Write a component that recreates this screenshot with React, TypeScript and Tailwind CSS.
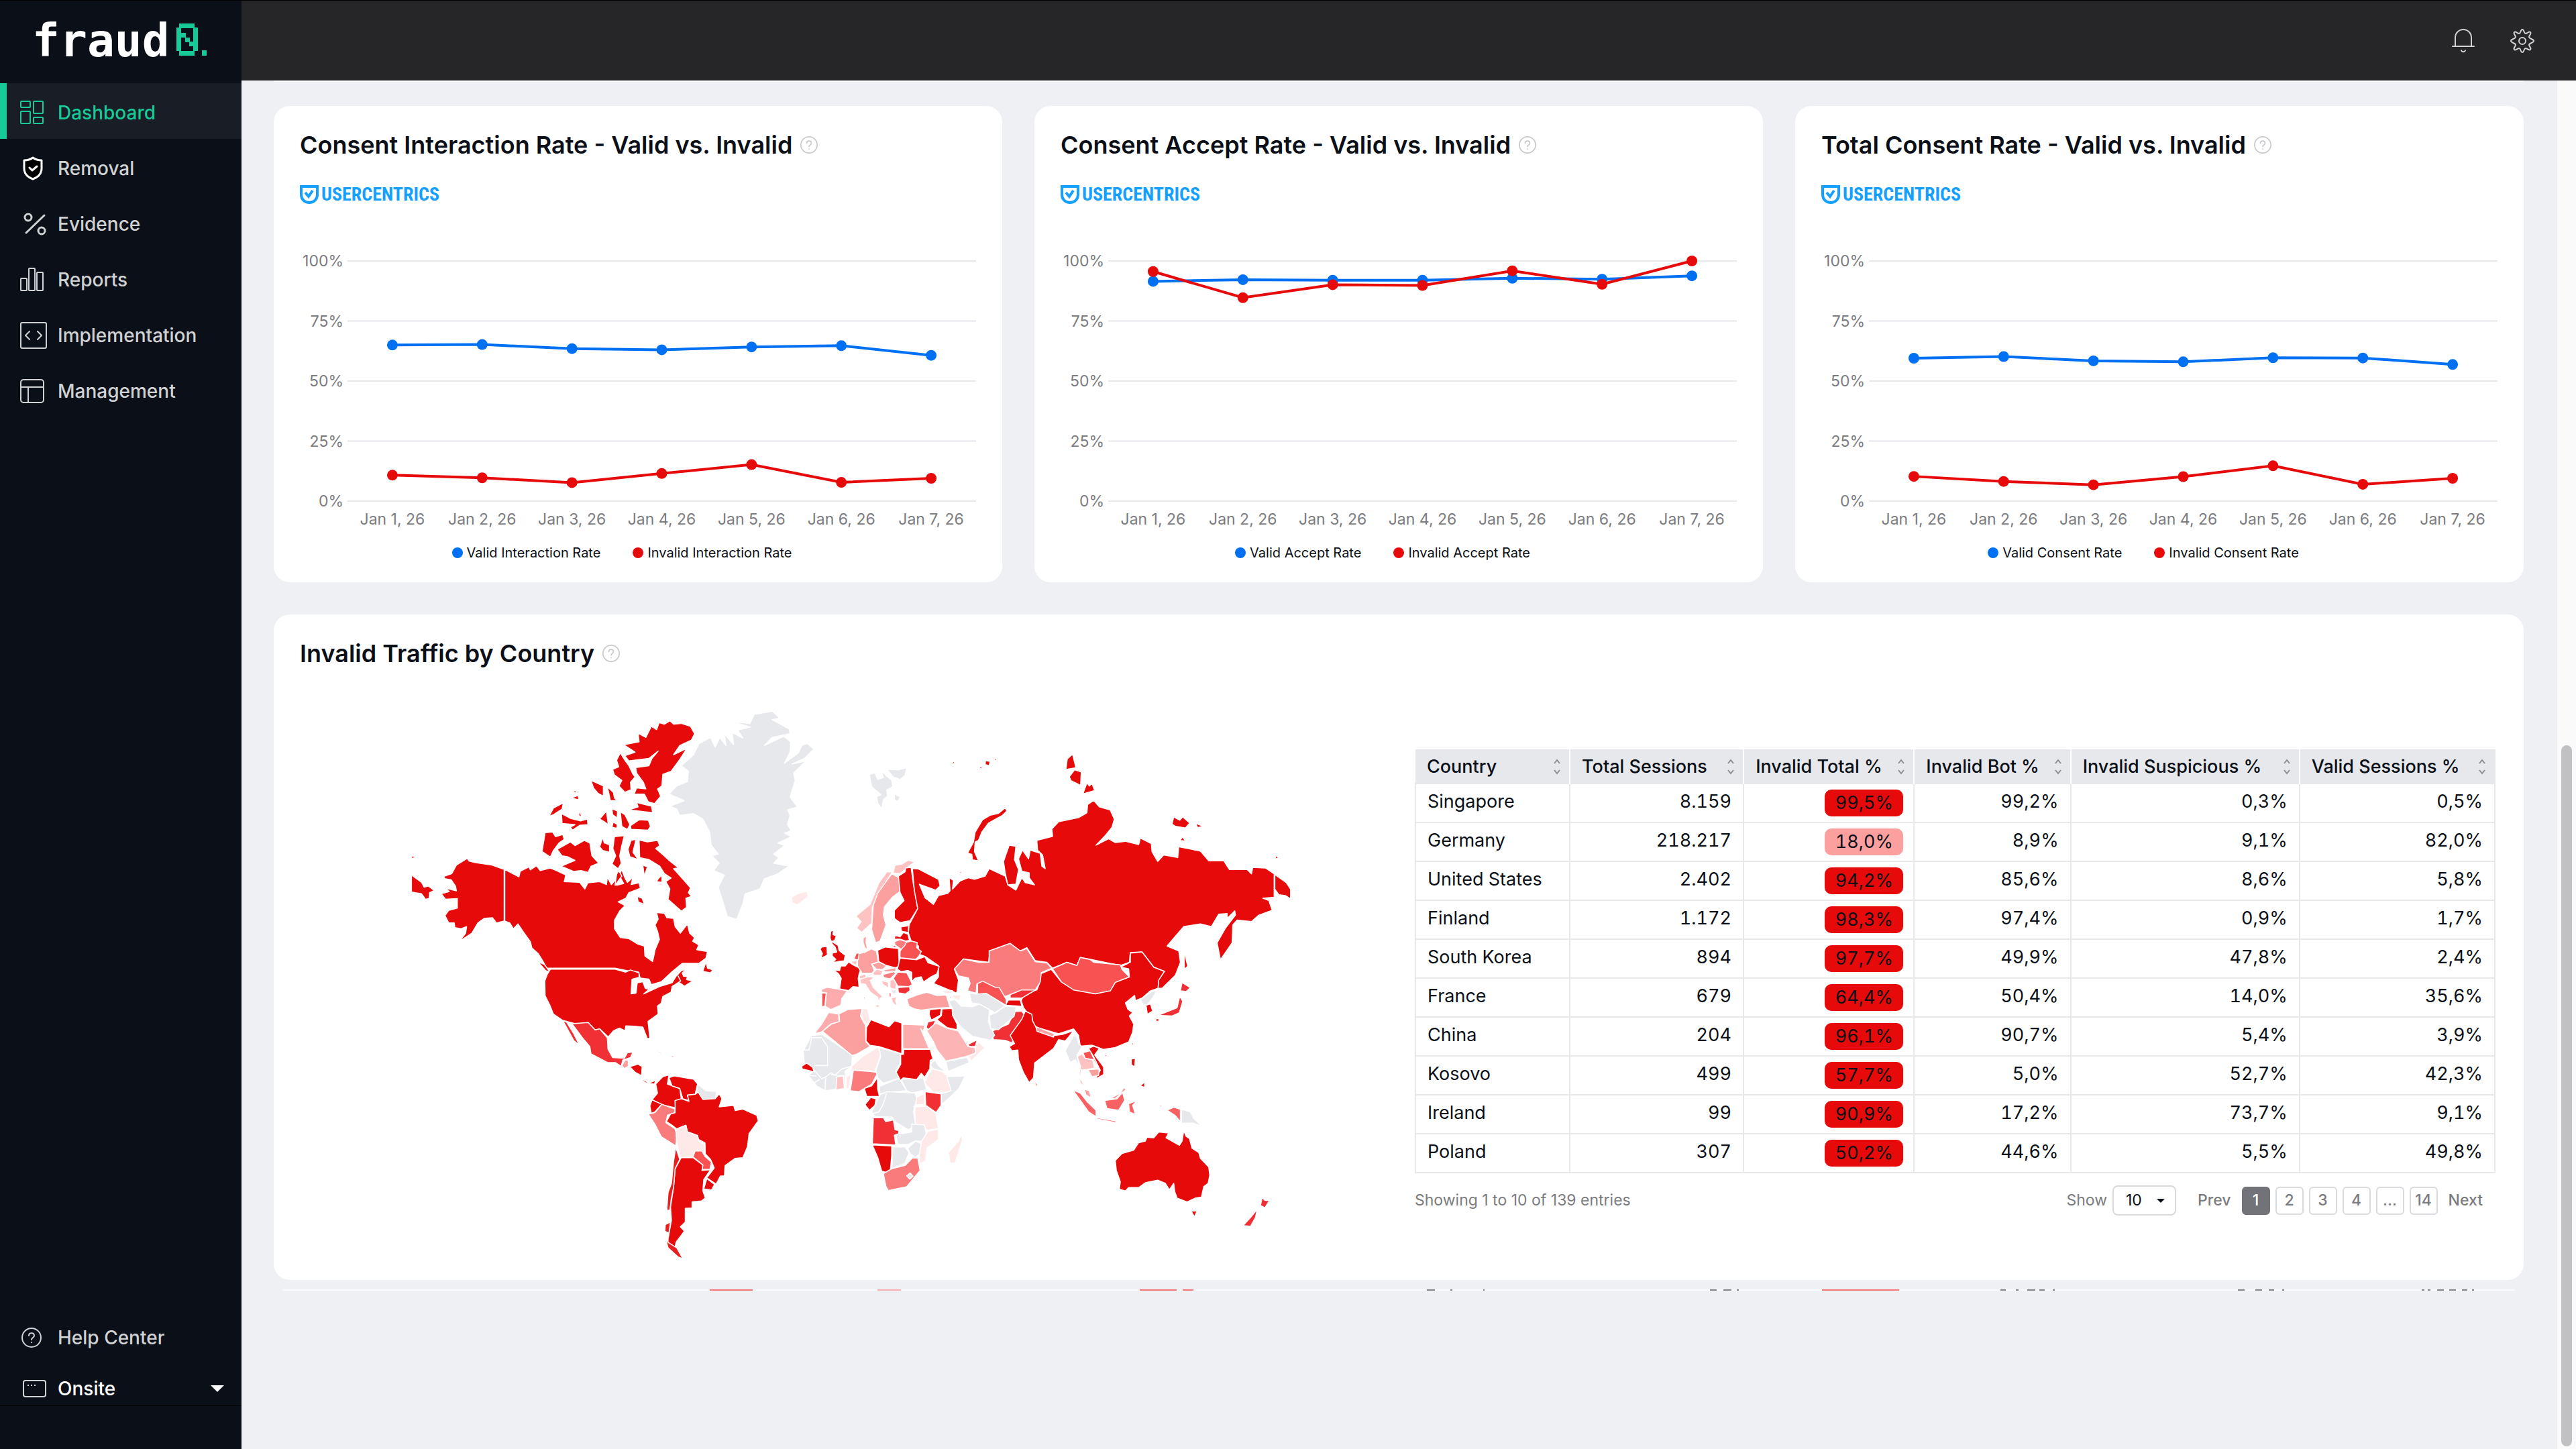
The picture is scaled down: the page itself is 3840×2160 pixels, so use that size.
import React, { useState } from 'react';

const RED = '#e60a0b';
const BLUE = '#0070f3';

interface ChartSeries {
  label: string;
  color: string;
  values: number[];
}

interface RateCardProps {
  title: string;
  series: ChartSeries[];
}

interface CountryRow {
  country: string;
  sessions: string;
  total: string;
  bot: string;
  suspicious: string;
  valid: string;
}

interface Land {
  fill: string;
  d: string;
}

const days = ['Jan 1, 26', 'Jan 2, 26', 'Jan 3, 26', 'Jan 4, 26', 'Jan 5, 26', 'Jan 6, 26', 'Jan 7, 26'];

const charts: RateCardProps[] = [
  {
    title: 'Consent Interaction Rate - Valid vs. Invalid',
    series: [
      { label: 'Valid Interaction Rate', color: BLUE, values: [65, 65.2, 63.5, 63, 64.2, 64.7, 60.7] },
      { label: 'Invalid Interaction Rate', color: RED, values: [10.8, 9.7, 7.7, 11.5, 15.2, 7.8, 9.5] },
    ],
  },
  {
    title: 'Consent Accept Rate - Valid vs. Invalid',
    series: [
      { label: 'Valid Accept Rate', color: BLUE, values: [91.5, 92.2, 92, 92, 92.8, 92.4, 93.8] },
      { label: 'Invalid Accept Rate', color: RED, values: [95.6, 84.7, 90.1, 89.8, 95.9, 90.3, 100] },
    ],
  },
  {
    title: 'Total Consent Rate - Valid vs. Invalid',
    series: [
      { label: 'Valid Consent Rate', color: BLUE, values: [59.5, 60.2, 58.4, 58, 59.7, 59.6, 56.9] },
      { label: 'Invalid Consent Rate', color: RED, values: [10.3, 8.2, 6.8, 10.2, 14.7, 7, 9.5] },
    ],
  },
];

const rows: CountryRow[] = [
  { country: 'Singapore', sessions: '8.159', total: '99,5%', bot: '99,2%', suspicious: '0,3%', valid: '0,5%' },
  { country: 'Germany', sessions: '218.217', total: '18,0%', bot: '8,9%', suspicious: '9,1%', valid: '82,0%' },
  { country: 'United States', sessions: '2.402', total: '94,2%', bot: '85,6%', suspicious: '8,6%', valid: '5,8%' },
  { country: 'Finland', sessions: '1.172', total: '98,3%', bot: '97,4%', suspicious: '0,9%', valid: '1,7%' },
  { country: 'South Korea', sessions: '894', total: '97,7%', bot: '49,9%', suspicious: '47,8%', valid: '2,4%' },
  { country: 'France', sessions: '679', total: '64,4%', bot: '50,4%', suspicious: '14,0%', valid: '35,6%' },
  { country: 'China', sessions: '204', total: '96,1%', bot: '90,7%', suspicious: '5,4%', valid: '3,9%' },
  { country: 'Kosovo', sessions: '499', total: '57,7%', bot: '5,0%', suspicious: '52,7%', valid: '42,3%' },
  { country: 'Ireland', sessions: '99', total: '90,9%', bot: '17,2%', suspicious: '73,7%', valid: '9,1%' },
  { country: 'Poland', sessions: '307', total: '50,2%', bot: '44,6%', suspicious: '5,5%', valid: '49,8%' },
];

const columns = [
  { label: 'Country', width: 'w-[14.3%]' },
  { label: 'Total Sessions', width: 'w-[16.1%]' },
  { label: 'Invalid Total %', width: 'w-[15.8%]' },
  { label: 'Invalid Bot %', width: 'w-[14.5%]' },
  { label: 'Invalid Suspicious %', width: 'w-[21.2%]' },
  { label: 'Valid Sessions %', width: 'w-[18.1%]' },
];

// Map shades, from no data to fully invalid
const NONE = '#e6e8eb';
const S1 = '#fee8e8';
const S2 = '#fec2c2';
const S3 = '#fc9f9f';
const S4 = '#f97b7c';
const S5 = '#f85253';
const S6 = '#f03034';

const americas: Land[] = [
  // Alaska and the far east tip
  { fill: RED, d: 'M134,486 160,478 175,455 210,437 216,444 235,448 290,455 330,467 330,607 305,612 292,598 265,600 245,612 225,640 185,662 205,640 208,622 190,628 170,625 168,612 150,612 138,592 150,578 178,572 178,546 140,548 126,533 152,527 140,518 175,525 172,512 158,495 137,492z' },
  { fill: RED, d: 'M29,482 62,502 70,515 84,512 103,524 88,530 86,546 75,548 62,533 41,530 29,528zM30,429 42,434 30,438z' },
  // Canada
  { fill: RED, d: 'M332,467 378,487 382,472 410,460 415,468 435,457 447,470 480,463 500,470 530,482 525,500 575,502 592,520 602,503 640,500 662,508 665,488 678,508 692,495 695,510 718,505 703,482 712,468 722,490 730,502 748,488 742,508 768,503 772,518 735,530 725,545 700,555 722,565 705,580 688,605 688,628 707,652 735,655 765,670 785,675 787,702 812,717 820,685 834,657 828,635 820,618 830,602 825,584 850,586 858,598 880,600 885,622 902,640 925,615 932,640 948,652 942,662 962,672 955,685 990,690 985,708 962,722 908,722 875,745 840,772 808,780 800,765 772,762 765,745 735,743 690,735 480,735 468,735 455,715 440,695 420,680 415,663 395,640 375,615 360,628 348,612 332,607z' },
  { fill: RED, d: 'M440,718 460,725 478,745 465,742zM880,765 905,742 922,738 908,748 912,757 925,758 922,766 942,770 915,784 905,778zM975,744 985,718 990,735 1007,740 1000,748z' },
  // Ellesmere and Axel Heiberg
  { fill: RED, d: 'M833,68 850,72 868,63 880,72 905,70 935,78 948,98 938,115 900,130 880,155 923,138 900,168 872,200 845,208 842,240 828,248 838,268 818,288 798,283 785,262 752,262 760,245 790,248 782,230 760,205 757,190 800,185 810,165 830,145 800,165 735,172 722,158 755,148 718,128 768,120 765,97 790,108 808,78 825,87z' },
  { fill: RED, d: 'M707,150 722,170 735,185 748,208 755,215 740,230 742,250 722,257 703,240 712,225 688,210 682,195 702,188 695,170z' },
  // Arctic islands
  { fill: RED, d: 'M735,305 765,297 760,285 808,295 812,312 785,310zM740,348 768,332 798,333 805,350 797,360 742,358zM707,310 722,318 738,345 730,358 712,350zM680,302 698,308 697,327 682,318zM684,338 698,345 695,355 680,352zM612,225 652,240 652,268 635,260 620,245zM665,242 685,258 688,273 698,280 675,280zM548,272 570,266 572,278zM552,256 572,247 560,258zM476,322 490,300 522,286 518,303 490,318zM516,315 545,328 578,335 600,330 602,345 575,347 552,360 545,352 560,345 518,342zM575,307 582,325 572,320zM640,330 662,308 668,345 655,337z' },
  { fill: RED, d: 'M463,367 487,365 497,378 520,372 525,385 508,395 490,415 480,433 453,418zM502,412 545,392 560,402 590,388 608,395 615,430 637,450 612,458 602,475 580,470 555,472 515,458 560,442 535,432 518,430zM640,405 650,380 655,395 672,400 672,420 650,415zM688,378 720,375 712,402 705,430 710,450 700,465 680,452 692,430 683,410zM702,470 712,485 690,510 695,480z' },
  { fill: RED, d: 'M732,412 742,388 758,385 748,420 765,440 738,432zM768,387 795,392 828,388 835,402 822,410 850,430 865,442 895,462 880,465 905,488 935,517 928,530 938,540 920,545 922,570 905,580 862,548 868,520 855,500 872,490 850,478 835,458 800,440 770,435zM762,540 778,545 785,562 765,555zM830,492 842,482 842,502 825,500zM780,455 795,460 785,485z' },
  { fill: NONE, d: 'M1142,45 1200,37 1225,55 1200,60 1255,85 1258,98 1200,108 1175,130 1238,105 1260,120 1258,148 1240,178 1285,150 1298,128 1315,125 1335,140 1305,165 1265,180 1310,172 1270,205 1275,225 1258,270 1282,297 1250,305 1258,320 1250,345 1262,362 1240,368 1262,378 1218,395 1240,402 1205,425 1222,435 1205,450 1255,458 1215,480 1175,492 1160,520 1112,533 1105,560 1085,602 1055,595 1040,555 1025,515 1045,482 1010,470 1028,450 1005,430 1025,425 1002,400 997,365 975,330 945,315 900,320 890,302 868,295 915,280 865,262 890,240 925,228 928,200 905,185 945,155 962,125 1000,108 1015,135 1030,108 1050,130 1045,98 1075,128 1070,95 1105,110 1088,88 1130,80 1070,65 1128,70z' },
  // United States
  { fill: RED, d: 'M480,738 690,738 725,746 740,740 768,748 768,760 745,765 742,805 758,803 762,775 780,772 788,790 800,793 783,805 835,785 875,775 892,752 903,770 875,785 872,800 845,812 840,830 828,838 830,860 797,880 803,925 795,927 780,895 752,893 725,892 722,905 705,898 685,905 668,922 640,900 625,903 603,883 565,887 520,877 490,860 478,835 463,810 462,770 470,752z' },
  { fill: S6, d: 'M550,886 603,883 625,903 640,900 665,925 667,955 682,978 720,980 730,965 748,963 740,978 715,985 710,1002 692,992 667,992 612,968 608,948 585,925zM520,877 533,882 555,912 575,945 556,932z' },
  { fill: S3, d: 'M712,1000 722,985 733,985 733,1002 720,1008z' },
  { fill: RED, d: 'M738,1003 765,996 778,1003 776,1027 755,1018zM760,1029 785,1040 800,1047 822,1040 818,1050 790,1047z' },
  { fill: NONE, d: 'M795,947 845,966 838,968z' },
  { fill: S3, d: 'M872,972 887,976 874,979z' },
  // South America
  { fill: RED, d: 'M822,1050 845,1030 865,1025 860,1050 900,1062 905,1090 885,1095 887,1115 845,1107 810,1093 828,1075z' },
  { fill: RED, d: 'M865,1033 882,1028 945,1037 958,1050 950,1078 925,1080 930,1095 910,1090 900,1062 875,1055z' },
  { fill: NONE, d: 'M958,1050 985,1068 1020,1070 1015,1090 975,1092 955,1070z' },
  { fill: RED, d: 'M810,1093 842,1105 820,1125 808,1130 803,1110z' },
  { fill: S4, d: 'M842,1105 885,1118 883,1128 860,1135 855,1155 885,1172 890,1190 887,1218 840,1193 820,1160 798,1132 820,1127z' },
  { fill: RED, d: 'M885,1095 905,1090 930,1097 925,1080 950,1078 960,1072 975,1092 1015,1090 1028,1077 1037,1090 1028,1112 1075,1108 1080,1122 1105,1118 1150,1135 1155,1150 1125,1185 1120,1220 1105,1250 1080,1252 1047,1272 1045,1300 1032,1300 1018,1322 988,1305 1012,1278 1000,1255 983,1240 982,1210 960,1200 958,1190 925,1180 920,1162 890,1172 875,1162 857,1152 870,1132 885,1128z' },
  { fill: S1, d: 'M890,1172 920,1162 925,1180 958,1190 962,1205 980,1215 982,1235 950,1232 943,1248 902,1250 893,1222 888,1190z' },
  { fill: S5, d: 'M950,1232 972,1232 983,1248 1003,1262 998,1282 973,1282 975,1270 943,1248z' },
  { fill: RED, d: 'M988,1307 1013,1323 1003,1338 978,1335z' },
  { fill: RED, d: 'M905,1250 943,1250 975,1270 972,1285 1000,1283 978,1310 975,1340 983,1360 970,1368 940,1370 940,1387 918,1388 918,1425 902,1438 915,1450 888,1480 885,1493 862,1490 862,1472 873,1420 870,1385 880,1330 885,1280z' },
  { fill: '#e81f20', d: 'M887,1222 900,1255 885,1280 880,1330 872,1365 868,1393 858,1393 862,1345 873,1320 880,1260zM853,1432 870,1425 865,1455 852,1450zM854,1470 862,1480 890,1495 910,1525 895,1520 862,1495z' },
];

const world: Land[] = [
  { fill: S1, d: 'M0,490 20,478 45,472 50,488 18,513 2,508z' },
  { fill: NONE, d: 'M233,112 250,108 258,128 275,122 270,100 285,118 300,130 303,150 285,160 288,178 275,190 270,218 258,200 255,180 268,175 240,150zM286,97 320,98 345,92 340,115 325,128 305,120zM308,172 326,182 318,195 308,190z' },
  // Scandinavia
  { fill: S2, d: 'M193,548 235,512 248,480 262,445 285,412 305,412 310,392 330,388 350,376 370,382 350,395 325,418 300,415 262,478 242,520 240,570 210,598 195,585 208,565z' },
  { fill: S3, d: 'M242,555 245,515 258,478 300,418 322,430 325,472 302,490 278,520 275,545 283,575 265,625 252,630 240,590z' },
  { fill: RED, d: 'M320,425 340,412 342,400 358,398 365,450 378,525 355,562 325,568 308,555 308,530 337,500 325,475z' },
  // Russia
  { fill: RED, d: 'M362,402 380,403 440,435 445,455 432,468 383,450 400,492 425,512 440,485 468,478 475,470 472,430 485,438 482,465 505,440 530,430 548,435 580,425 592,402 640,425 648,452 672,468 690,430 700,445 728,452 712,430 712,415 690,410 680,372 692,345 710,372 715,345 745,355 750,395 760,402 752,360 737,345 735,315 782,303 780,280 800,258 860,245 885,230 887,205 905,192 922,212 955,222 967,250 960,275 940,300 912,330 950,310 970,322 1000,318 1040,328 1045,308 1078,325 1080,350 1097,380 1115,360 1157,368 1160,335 1225,348 1250,378 1295,378 1312,405 1365,405 1378,418 1382,398 1420,400 1446,418 1446,490 1412,493 1430,500 1440,530 1400,545 1378,565 1335,560 1322,575 1320,630 1285,682 1275,630 1300,585 1330,545 1328,532 1305,555 1305,540 1280,542 1258,580 1225,572 1175,580 1125,640 1160,655 1165,690 1150,730 1110,770 1097,770 1098,745 1117,718 1085,705 1050,658 1015,660 1012,690 985,700 890,680 865,675 855,700 825,690 782,708 765,690 730,685 705,645 685,655 655,632 595,655 590,690 515,680 488,712 500,745 495,785 425,755 440,735 440,700 400,672 380,665 380,640 360,630 350,600 352,575 378,525 368,470z' },
  { fill: RED, d: 'M648,452 640,415 635,380 652,330 672,333 668,375 680,405 672,450zM1448,420 1482,445 1495,465 1495,495 1480,485 1460,482 1448,465z' },
  { fill: RED, d: 'M527,355 545,320 550,290 572,252 595,238 620,232 640,215 645,225 632,238 590,262 570,290 560,315 550,320 548,350 560,378 542,375 540,358zM822,97 826,65 842,50 852,92zM832,120 848,98 868,105 866,146 838,132zM873,172 885,138 892,148 900,140 908,162zM1140,265 1145,243 1163,253 1172,243 1193,262 1180,277 1150,272zM1210,262 1233,272 1217,276zM1163,315 1172,305 1180,317zM478,78 490,70 486,80zM545,58 562,70 555,68zM581,70 595,72 592,85 580,82zM603,70 617,58 613,68zM562,90 572,88 568,97zM1450,362 1460,368 1450,373zM1176,655 1187,702 1177,712zM503,410 512,412 505,417z' },
  { fill: S4, d: 'M488,710 515,680 560,690 592,690 592,655 655,632 685,655 705,648 730,688 765,692 780,708 748,722 748,748 730,775 690,775 640,795 580,752 555,757 553,785 527,778 535,755 530,738 500,732z' },
  // East Asia
  { fill: RED, d: 'M688,808 698,785 735,775 745,750 748,725 778,712 808,750 845,772 910,787 955,775 970,750 1012,735 1010,710 985,705 1015,690 1015,662 1050,658 1085,705 1117,718 1100,745 1098,770 1075,778 1050,800 1030,808 1028,792 1000,815 1008,835 1022,845 1012,855 1025,880 1022,905 1010,935 970,952 935,958 900,945 865,948 860,915 845,895 800,910 750,895 730,890 718,860 695,830z' },
  { fill: S5, d: 'M782,710 825,690 855,700 865,675 895,682 905,690 985,698 990,712 1012,735 970,752 955,778 910,787 845,775 808,750z' },
  { fill: NONE, d: 'M1045,805 1075,782 1095,775 1085,795 1065,822 1052,818z' },
  { fill: RED, d: 'M1062,822 1075,818 1082,840 1066,850z' },
  { fill: S6, d: 'M1170,752 1195,768 1182,780 1165,778zM1163,795 1172,810 1162,845 1140,855 1098,853 1155,830zM1092,860 1105,868 1092,874zM655,790 690,775 732,775 715,785 690,800 655,800z' },
  { fill: RED, d: 'M640,822 650,806 685,806 690,825zM1018,988 1030,985 1028,1012 1018,1005zM1045,1070 1058,1058 1058,1075zM1019,940 1025,935 1022,950zM938,974 946,976 940,982z' },
  // South Asia
  { fill: S6, d: 'M600,902 650,880 668,842 690,840 705,865 680,890 660,938 640,930 605,928z' },
  { fill: RED, d: 'M655,915 690,865 700,840 720,850 722,870 735,895 788,915 812,912 845,900 830,920 820,932 800,928 785,955 728,1000 725,1045 712,1060 695,1030 680,990 678,960 660,962 652,950 668,940z' },
  { fill: S3, d: 'M732,888 787,910 785,920 735,902zM728,1055 738,1066 732,1075z' },
  { fill: NONE, d: 'M820,962 845,915 855,918 860,940 870,950 855,975 862,1012 850,990 835,998z' },
  { fill: S2, d: 'M856,980 870,972 880,985 902,990 908,1015 885,1020 868,1020 865,1045 878,1072 865,1062 862,1030 866,1010z' },
  { fill: S5, d: 'M873,968 895,962 905,985 925,1005 922,1018 905,990 880,985z' },
  { fill: RED, d: 'M890,955 905,948 922,955 908,975 935,1012 935,1035 910,1050 925,1022 905,980z' },
  { fill: S3, d: 'M888,1020 922,1018 920,1038 900,1042zM955,1108 985,1092 995,1075 1003,1082 985,1095 970,1110zM877,1080 892,1085 898,1107 882,1098z' },
  { fill: '#f86263', d: 'M843,1083 865,1092 885,1118 912,1145 912,1165 890,1150zM912,1167 972,1178 972,1183 915,1172zM938,1115 975,1110 992,1090 998,1115 980,1145 945,1140zM1010,1125 1035,1115 1022,1130 1030,1158 1012,1150zM1125,1145 1145,1136 1165,1142 1165,1180 1150,1162zM1100,1128 1113,1132 1105,1135z' },
  { fill: NONE, d: 'M1168,1142 1195,1150 1205,1170 1230,1195 1205,1185 1168,1185zM1230,1165 1243,1158 1235,1165z' },
  // Oceania
  { fill: RED, d: 'M970,1300 990,1278 1025,1268 1040,1245 1060,1240 1065,1228 1085,1230 1100,1212 1130,1215 1122,1230 1162,1253 1170,1240 1175,1208 1182,1225 1192,1232 1200,1262 1220,1275 1225,1293 1250,1320 1253,1345 1248,1370 1235,1380 1228,1412 1210,1415 1185,1427 1155,1415 1148,1395 1145,1370 1132,1390 1120,1370 1097,1360 1060,1368 1040,1383 1010,1383 1000,1393 982,1388 985,1365 973,1330zM1197,1455 1215,1455 1207,1473z' },
  { fill: S6, d: 'M1410,1413 1418,1422 1432,1423 1418,1445 1405,1438zM1353,1500 1375,1475 1395,1450 1390,1475 1375,1502z' },
  // Africa
  { fill: NONE, d: 'M35,962 60,915 92,912 182,975 180,1010 160,1025 160,1075 135,1080 100,1085 75,1070 50,1038 68,1022 38,1000z' },
  { fill: 'none', d: 'M36,960 52,960 58,935 60,922 92,922M92,925 108,950 108,1008 68,1008M180,1010 150,1018 130,1038 118,1030 100,1045M68,1022 90,1048 102,1043 100,1085M118,1035 160,1040M65,1062 85,1050M50,1038 75,1040' },
  { fill: RED, d: 'M30,1010 45,1000 62,1012 68,1027 32,1018z' },
  { fill: S2, d: 'M135,1043 155,1040 158,1078 133,1083z' },
  { fill: S1, d: 'M180,1018 180,1010 215,978 260,950 267,975 250,1025 190,1022 165,1028zM163,1045 178,1032 172,1078 163,1080z' },
  { fill: S4, d: 'M176,1085 185,1022 245,1027 258,1030 240,1065 202,1088z' },
  { fill: NONE, d: 'M253,1022 267,980 262,952 328,972 325,1000 312,1025 325,1045 275,1062 258,1045z' },
  { fill: RED, d: 'M218,1078 240,1070 257,1045 258,1080 263,1103 225,1102zM220,1128 237,1106 253,1110 250,1130 233,1145z' },
  { fill: NONE, d: 'M263,1072 322,1047 345,1085 285,1090 265,1095z' },
  { fill: NONE, d: 'M328,1050 395,1045 405,1082 360,1092 345,1085z' },
  { fill: S1, d: 'M398,1060 420,1018 450,1025 497,1065 470,1090 425,1090z' },
  { fill: NONE, d: 'M415,1005 430,990 440,1008 465,1028 425,1018zM465,1042 520,1040 500,1080 450,1128 448,1095 478,1085z' },
  { fill: S6, d: 'M400,1088 448,1095 448,1130 433,1152 402,1130z' },
  { fill: S1, d: 'M375,1105 398,1093 398,1128 370,1128zM370,1135 405,1132 432,1155 440,1200 408,1207 370,1185z' },
  { fill: NONE, d: 'M240,1150 265,1098 285,1088 370,1092 375,1110 365,1150 372,1190 350,1205 312,1182 300,1165 250,1165z' },
  { fill: 'none', d: 'M285,1092 275,1125 262,1150 245,1155' },
  { fill: S6, d: 'M245,1168 275,1168 282,1180 305,1175 310,1205 322,1208 320,1218 308,1222 312,1252 242,1248z' },
  { fill: NONE, d: 'M313,1220 360,1212 360,1188 398,1190 408,1240 370,1240 350,1250 318,1250z' },
  { fill: RED, d: 'M242,1252 300,1255 300,1285 295,1340 270,1332 258,1290zM366,1133 371,1133 369,1140z' },
  { fill: NONE, d: 'M303,1258 340,1258 352,1275 340,1308 300,1325z' },
  { fill: NONE, d: 'M348,1262 372,1240 388,1248 388,1278 370,1290 355,1278z' },
  { fill: S1, d: 'M408,1210 440,1203 440,1235 405,1262 402,1300 385,1310 382,1285 390,1240zM470,1275 500,1240 508,1218 512,1235 490,1308 475,1308z' },
  { fill: S4, d: 'M275,1340 300,1325 340,1315 362,1292 378,1292 385,1330 345,1380 290,1392 283,1380z' },
  { fill: NONE, d: 'M345,1347 355,1338 364,1348 354,1357z' },
];

const europe: Land[] = [
  { fill: RED, d: 'M85,25 97,20 95,40 110,45 103,65 90,70 118,88 122,110 140,125 150,132 145,157 120,160 93,165 108,150 92,135 92,122 112,118 105,95 92,82 82,55zM45,95 68,92 70,132 40,145 48,125 38,105z' },
  { fill: RED, d: 'M97,197 125,200 130,180 150,180 165,162 185,175 220,192 212,215 208,235 212,275 185,272 165,290 125,282 132,235 120,215z' },
  { fill: '#fcacac', d: 'M43,285 70,275 160,290 135,325 130,355 85,375 60,360 66,300 45,298z' },
  { fill: S5, d: 'M45,300 65,302 58,360 45,362z' },
  { fill: S3, d: 'M205,125 235,120 268,103 290,115 298,162 268,172 280,200 270,212 225,212 205,180zM230,55 245,45 243,75 250,105 238,100 230,75z' },
  { fill: S5, d: 'M188,148 200,122 212,122 208,152z' },
  { fill: S2, d: 'M172,160 203,155 200,178zM212,225 240,215 245,235 215,238zM272,212 290,195 320,200 310,222 278,222z' },
  { fill: S3, d: 'M268,172 300,162 335,178 318,195 290,195zM322,197 378,187 375,203 330,207z' },
  { fill: S4, d: 'M318,218 370,205 375,215 350,238 322,232z' },
  { fill: S2, d: 'M215,240 250,228 282,230 262,245 275,275 318,318 305,325 300,345 295,320 262,297 240,262 218,258zM278,357 302,352 300,368zM230,316 240,320 236,338zM310,245 342,252 345,280 318,262zM350,245 365,238 380,262 375,285 350,278zM356,322 382,318 375,335 383,358 370,352 360,340zM418,303 435,305 430,312z' },
  { fill: NONE, d: 'M355,288 378,285 378,302 362,305z' },
  { fill: S3, d: 'M345,295 357,302 355,322 345,315z' },
  { fill: RED, d: 'M295,110 330,95 388,102 390,150 392,180 375,188 335,178 300,160zM358,95 372,86 380,95z' },
  { fill: S5, d: 'M365,235 385,207 425,210 440,240 450,262 435,272 385,270z' },
  { fill: S6, d: 'M385,277 438,272 440,290 420,305 388,300z' },
  { fill: S1, d: 'M430,205 448,205 462,235 448,240zM585,288 630,290 628,305 590,300zM630,310 668,308 660,335 632,322z' },
  { fill: RED, d: 'M383,195 395,145 470,152 505,138 520,165 570,182 560,215 535,228 500,252 490,228 462,235 448,250 447,208 430,200 400,205zM607,315 622,318 625,328z' },
  { fill: S5, d: 'M395,115 420,75 445,68 472,75 470,98 490,115 480,135 465,150 395,143z' },
  { fill: S4, d: 'M370,72 395,62 425,72 415,90 400,105 372,85z' },
  { fill: RED, d: 'M370,60 372,42 395,50 410,30 430,38 437,65 420,68 395,60zM398,5 433,0 432,30 402,25z' },
  { fill: S3, d: 'M425,328 470,310 515,298 560,312 602,310 618,365 560,368 490,377 460,372 435,360z' },
  // Middle East
  { fill: RED, d: 'M528,375 580,370 575,400 535,422 525,395zM583,372 628,370 630,400 650,440 650,465 605,455 560,420 580,402z' },
  { fill: S6, d: 'M512,455 520,430 555,422 545,445 522,465zM700,530 740,510 732,540 705,540z' },
  { fill: '#fdb4b4', d: 'M515,470 555,435 610,460 655,470 700,540 730,545 732,570 690,585 600,605 560,555 545,520z' },
  { fill: S1, d: 'M732,545 745,518 775,545 715,605 700,585 732,570z' },
  { fill: NONE, d: 'M600,608 695,588 705,612 610,652z' },
  { fill: NONE, d: 'M612,337 640,330 670,360 720,362 750,350 795,375 790,430 818,490 800,512 745,500 720,495 665,450 630,400 632,375z' },
  { fill: NONE, d: 'M705,300 740,305 768,287 865,358 820,388 750,350 715,345z' },
  { fill: NONE, d: 'M795,400 825,388 865,360 915,362 905,405 835,465 800,460z' },
  { fill: S5, d: 'M742,258 765,248 820,275 838,275 870,330 870,357 780,302 742,305z' },
  // North Africa
  { fill: '#fcacac', d: 'M12,482 45,440 75,388 120,395 122,430 85,440 45,475z' },
  { fill: S3, d: 'M48,472 88,440 125,428 122,395 160,375 225,370 218,405 240,445 243,520 262,540 200,575 180,580z' },
  { fill: S1, d: 'M228,370 250,372 262,425 243,445 220,405z' },
  { fill: RED, d: 'M245,455 265,420 345,452 370,425 403,435 403,572 300,540 260,535 243,515z' },
  { fill: '#fcacac', d: 'M407,440 505,445 500,475 487,460 525,550 407,550z' },
  { fill: RED, d: 'M412,553 530,553 542,595 530,602 528,640 505,678 490,660 470,688 410,680 397,692 378,655 398,620 398,575 410,575z' },
];

const navItems = [
  {
    label: 'Dashboard',
    icon: (
      <>
        <rect x="1" y="1" width="14" height="9" rx="1" />
        <rect x="1" y="16" width="14" height="18" rx="1" />
        <rect x="20" y="1" width="14" height="18" rx="1" />
        <rect x="20" y="25" width="14" height="9" rx="1" />
      </>
    ),
  },
  {
    label: 'Removal',
    icon: (
      <>
        <path d="M19 2c4 3 8 4 13 4v12c0 8-5 13-13 16C11 31 6 26 6 18V6c5 0 9-1 13-4z" fill="#000" stroke="#fff" strokeWidth="3" />
        <path d="M14 17l4 4 7-6" stroke="#fff" strokeWidth="3" />
      </>
    ),
  },
  {
    label: 'Evidence',
    icon: (
      <g strokeWidth="3">
        <circle cx="12" cy="8" r="5" />
        <circle cx="32" cy="28" r="5" />
        <path d="M36 5 9 31" />
      </g>
    ),
  },
  {
    label: 'Reports',
    icon: (
      <>
        <rect x="1" y="16" width="9" height="18" rx="1" />
        <rect x="13" y="1" width="9" height="33" rx="1" />
        <rect x="25" y="7" width="9" height="27" rx="1" />
      </>
    ),
  },
  {
    label: 'Implementation',
    icon: (
      <>
        <rect x="1" y="-1" width="38" height="38" rx="2" />
        <path d="M14 12l-6 6 6 6M26 12l6 6-6 6" />
      </>
    ),
  },
  {
    label: 'Management',
    icon: (
      <>
        <rect x="1" y="1" width="34" height="34" rx="4" />
        <path d="M1 12h34M12 12v23" />
      </>
    ),
  },
];

const HelpIcon: React.FC<{ className?: string }> = ({ className }) => (
  <svg viewBox="0 0 30 30" className={className} fill="none" stroke="currentColor" strokeWidth="2" strokeLinecap="round">
    <circle cx="15" cy="15" r="14" />
    <path d="M11 12c0-5 8-5 8 0 0 3-4 3-4 6" />
    <path d="M15 22v.2" />
  </svg>
);

const Logo: React.FC = () => (
  <a href="#" className="flex items-end pl-12 pt-[20px] h-[92px] text-white" aria-label="fraud0">
    <span className="font-['DejaVu_Sans_Mono',monospace] font-bold text-[68px] leading-[64px]">fraud</span>
    <svg viewBox="0 0 46 48" className="w-[46px] h-[48px] ml-2.5 mb-2.5" fill="#18ca98">
      <path d="M4 0h23v6h5v35h-5v7H4v-7H0V6h4zM7 7v7h7v7h6v6h5V7zM7 21v20h18v-7h-6v-6h-6v-7z" fillRule="evenodd" />
      <rect x="38" y="40" width="7" height="8" />
    </svg>
  </a>
);

const Sidebar: React.FC = () => {
  const [active, setActive] = useState('Dashboard');

  return (
    <aside className="w-[360px] shrink-0 bg-[#0b1018] border-t border-black flex flex-col text-[#d0d1d3] font-medium">
      <Logo />
      <nav className="mt-[31px] flex flex-col">
        {navItems.map((item) => (
          <a
            key={item.label}
            href="#"
            onClick={() => setActive(item.label)}
            className={`h-[83px] flex items-center border-l-10 pl-5 pt-1 text-[28px] ${active === item.label ? 'border-[#18ca98] bg-[#191d26] text-[#18ca98]' : 'border-transparent'}`}
          >
            <svg viewBox="0 0 40 36" className="w-10 h-9 mr-4 overflow-visible" fill="none" stroke="currentColor" strokeWidth="2" strokeLinecap="round" strokeLinejoin="round">
              {item.icon}
            </svg>
            {item.label}
          </a>
        ))}
      </nav>
      <div className="mt-auto mb-16 text-[28px]">
        <a href="#" className="h-[76px] flex items-center pl-8">
          <HelpIcon className="w-[30px] h-[30px] mr-6" />
          Help Center
        </a>
        <button className="mt-3 h-[52px] w-full flex items-center pl-[34px] pr-[26px] border-b border-black text-white">
          <svg viewBox="0 0 36 26" className="w-9 h-[26px] mr-4" fill="none" stroke="#d0d1d3" strokeWidth="2">
            <rect x="1" y="1" width="33" height="24" rx="3" />
            <path d="M7 8h2M12 8h2M17 8h2" />
          </svg>
          Onsite
          <svg viewBox="0 0 20 10" className="w-5 h-2.5 ml-auto" fill="#fff">
            <path d="M0 0h20L10 10z" />
          </svg>
        </button>
      </div>
    </aside>
  );
};

const TopBar: React.FC = () => (
  <header className="h-[120px] shrink-0 bg-[#262628] border-t border-black flex items-center justify-end gap-[52px] pr-[62px] text-[#d0d1d3]">
    <button aria-label="Notifications">
      <svg viewBox="0 0 36 36" className="w-9 h-9" fill="none" stroke="currentColor" strokeWidth="2" strokeLinecap="round">
        <path d="M2 26h32M6 26V13a12 12 0 0 1 24 0v13M15 32c1 3 5 3 6 0" />
      </svg>
    </button>
    <button aria-label="Settings">
      <svg viewBox="0 0 36 36" className="w-9 h-9" fill="none" stroke="currentColor" strokeWidth="2" strokeLinejoin="round">
        <path d="M18 1c3 0 2 6 5 6 2 0 5-4 7-2s-2 5-2 7c0 3 7 3 7 6s-7 3-7 6c0 2 4 5 2 7s-5-2-7-2c-3 0-2 6-5 6s-2-6-5-6c-2 0-5 4-7 2s2-5 2-7c0-3-7-3-7-6s7-3 7-6c0-2-4-5-2-7s5 2 7 2c3 0 2-6 5-6z" />
        <circle cx="18" cy="18" r="5" />
      </svg>
    </button>
  </header>
);

const CardTitle: React.FC<{ children: React.ReactNode }> = ({ children }) => (
  <h2 className="flex items-center gap-3 text-[36px] leading-[44px] font-semibold text-[#0b1018]">
    {children}
    <HelpIcon className="w-[26px] h-[26px] text-[#c9cacd]" />
  </h2>
);

const RateCard: React.FC<RateCardProps> = ({ title, series }) => {
  const x = (i: number) => 71 + (937 / 7) * (i + 0.5);
  const y = (v: number) => 375 - v * 3.58;

  return (
    <section className="bg-white rounded-3xl px-[39px] pt-9 pb-7">
      <CardTitle>{title}</CardTitle>
      <div className="mt-9 flex items-center gap-1 text-[#159fff]">
        <svg viewBox="0 0 28 28" className="w-7 h-7" fill="none" stroke="currentColor" strokeWidth="4">
          <path d="M2 2h24v12c0 7-5 12-12 12S2 21 2 14z" />
          <path d="M8 11l5 6 6-9" />
        </svg>
        <span className="font-['Liberation_Sans_Narrow','Roboto_Condensed','Liberation_Sans',sans-serif] font-bold text-[28px] leading-8">USERCENTRICS</span>
      </div>
      <svg viewBox="0 0 1008 428" className="w-full mt-[66px]" aria-label={title}>
        {[0, 25, 50, 75, 100].map((tick) => (
          <g key={tick}>
            <line x1="71" x2="1008" y1={y(tick)} y2={y(tick)} stroke="#e6e8eb" strokeWidth="2" />
            <text x="65" y={y(tick) + 8} textAnchor="end" fontSize="23" fill="#7b7c80">{tick}%</text>
          </g>
        ))}
        {days.map((day, i) => (
          <text key={day} x={x(i)} y="410" textAnchor="middle" fontSize="23" fill="#7b7c80">{day}</text>
        ))}
        {series.map((s) => (
          <g key={s.label} fill={s.color}>
            <polyline points={s.values.map((v, i) => `${x(i)},${y(v)}`).join(' ')} fill="none" stroke={s.color} strokeWidth="4" />
            {s.values.map((v, i) => (
              <circle key={i} cx={x(i)} cy={y(v)} r="8" />
            ))}
          </g>
        ))}
      </svg>
      <ul className="mt-2 flex justify-center text-[20px] leading-8 text-[#0b1018]">
        {series.map((s) => (
          <li key={s.label} className="flex items-center gap-1.5 mr-12">
            <svg viewBox="0 0 16 16" className="w-4 h-4">
              <circle cx="8" cy="8" r="8" fill={s.color} />
            </svg>
            {s.label}
          </li>
        ))}
      </ul>
    </section>
  );
};

const Lands: React.FC<{ lands: Land[]; transform: string }> = ({ lands, transform }) => (
  <g transform={transform}>
    {lands.map((land, i) => (
      <path key={i} d={land.d} fill={land.fill} stroke="#fff" strokeWidth="1.5" strokeLinejoin="round" vectorEffect="non-scaling-stroke" />
    ))}
  </g>
);

const WorldMap: React.FC = () => (
  <svg viewBox="447 1040 1610 850" className="w-full" aria-label="World map">
    <Lands lands={americas} transform="translate(600 1040) scale(.4592 .5485)" />
    <Lands lands={world} transform="translate(1180 1100) scale(.4975 .4847)" />
    <Lands lands={europe} transform="translate(1210 1380) scale(.3333)" />
  </svg>
);

const SortIcon: React.FC = () => (
  <svg viewBox="0 0 12 24" className="w-3 h-6 shrink-0" fill="none" stroke="#8b8c90" strokeWidth="2">
    <path d="M2 7l4-5 4 5M2 17l4 5 4-5" />
  </svg>
);

const CountryTable: React.FC = () => {
  const [page, setPage] = useState('1');

  return (
    <div className="w-[1611px] shrink-0 pt-[77px]">
      <table className="w-full table-fixed border-collapse text-[27px] text-[#0b1018]">
        <thead>
          <tr className="h-[51px] bg-[#e6e8eb]">
            {columns.map((col) => (
              <th key={col.label} className={`${col.width} pl-[17px] pr-3 pt-0.5 font-medium border-r-2 border-white last:border-[#e6e8eb]`}>
                <button className="w-full flex items-center justify-between whitespace-nowrap">
                  {col.label}
                  <SortIcon />
                </button>
              </th>
            ))}
          </tr>
        </thead>
        <tbody>
          {rows.map((row) => (
            <tr key={row.country} className="h-[58px] tabular-nums text-right *:border-2 *:border-[#e6e8eb] *:px-[17px] *:pb-1">
              <td className="text-left">{row.country}</td>
              <td>{row.sessions}</td>
              <td>
                <span className={`inline-flex items-center justify-center w-[117px] h-10 -mr-0.5 mt-1 rounded-[10px] align-middle ${row.country === 'Germany' ? 'bg-[#fc9f9f]' : 'bg-[#e60a0b]'}`}>
                  {row.total}
                </span>
              </td>
              <td>{row.bot}</td>
              <td>{row.suspicious}</td>
              <td>{row.valid}</td>
            </tr>
          ))}
        </tbody>
      </table>
      <div className="mt-[18px] flex items-center text-[23px] text-[#7b7c80]">
        <span>Showing 1 to 10 of 139 entries</span>
        <label htmlFor="page-size" className="ml-auto mr-2">Show</label>
        <span className="relative flex items-center">
          <select id="page-size" defaultValue="10" className="appearance-none w-[95px] h-[45px] pl-[18px] rounded-lg border-2 border-[#d9dadd] bg-white text-[#0b1018]">
            <option>10</option>
            <option>25</option>
            <option>50</option>
          </select>
          <svg viewBox="0 0 12 6" className="w-3 h-1.5 absolute right-[17px] pointer-events-none" fill="#0b1018">
            <path d="M0 0h12L6 6z" />
          </svg>
        </span>
        <div className="flex items-center gap-2 pr-[19px] ml-8 font-medium">
          <button className="mr-2">Prev</button>
          {['1', '2', '3', '4', '...', '14'].map((p) => (
            <button
              key={p}
              onClick={() => setPage(p)}
              className={`w-[42px] h-[42px] rounded-md border-2 ${page === p ? 'bg-[#727379] border-[#727379] text-white' : 'border-[#d9dadd]'}`}
            >
              {p}
            </button>
          ))}
          <button className="ml-2">Next</button>
        </div>
      </div>
    </div>
  );
};

export default function App() {
  return (
    <div className="min-h-screen flex bg-[#eff0f4] font-['Inter','Liberation_Sans',sans-serif]">
      <Sidebar />
      <div className="flex-1 min-w-0 flex flex-col">
        <TopBar />
        <div className="flex-1 flex">
          <main className="flex-1 min-w-0 px-12">
            <div className="h-0.5 bg-white" />
            <div className="mt-9 grid grid-cols-3 gap-12">
              {charts.map((chart) => (
                <RateCard key={chart.title} {...chart} />
              ))}
            </div>
            <section className="mt-12 bg-white rounded-3xl pl-[39px] pr-[42px] pt-9 pb-[18px]">
              <CardTitle>Invalid Traffic by Country</CardTitle>
              <div className="mt-11 flex items-start gap-13">
                <div className="flex-1 min-w-0">
                  <WorldMap />
                </div>
                <CountryTable />
              </div>
            </section>
            {/* Edge of the next section */}
            <svg viewBox="0 0 3355 2" className="w-full mt-3.5" shapeRendering="crispEdges">
              <path d="M0 1h3355" stroke="#f8f9fb" strokeWidth="2" />
              <path d="M642 1h65M1288 1h56M1353 1h16M2313 1h116" stroke="#f4787a" strokeWidth="2" />
              <path d="M894 1h36" stroke="#f9b0b2" strokeWidth="2" />
              <path d="M1720 1h12M1755 1h3M1804 1h3M2145 1h10M2165 1h12M2185 1h3M2582 1h8M2605 1h4M2622 1h12M2640 1h8M2660 1h3M2938 1h10M2965 1h10M2985 1h8M3005 1h3M3215 1h4M3224 1h4M3238 1h10M3256 1h10M3275 1h8M3290 1h3" stroke="#85868c" strokeWidth="2" />
            </svg>
          </main>
          <div className="w-[30px] bg-[#fafafb] border-l border-[#e6e7e9] flex flex-col items-center pt-[991px] pb-1">
            <div className="w-4 flex-1 rounded-full bg-[#c1c1c3]" />
          </div>
        </div>
      </div>
    </div>
  );
}
